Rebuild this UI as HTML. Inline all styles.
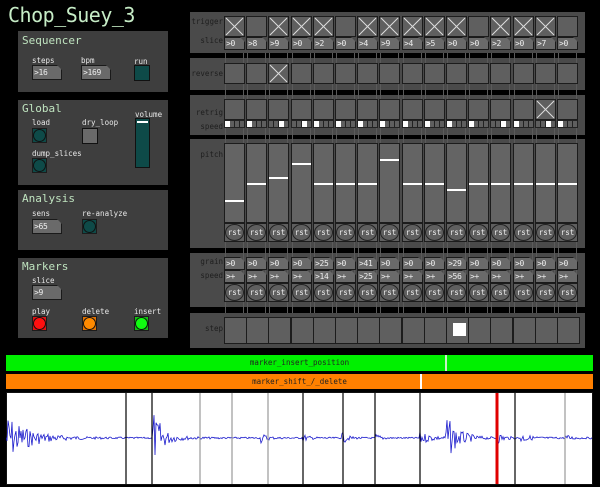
<!DOCTYPE html>
<html><head><meta charset="utf-8">
<style>
*{margin:0;padding:0;box-sizing:border-box}
body{width:600px;height:487px;background:#000;position:relative;overflow:hidden;font-family:"DejaVu Sans Mono","Liberation Mono",monospace;}
.a{position:absolute}
.title{left:8px;top:3px;font-size:20px;color:#c6ecc6;letter-spacing:-0.5px}
.lp{background:#3e3e3e}
.rp{background:#4a4a4a}
.h{color:#bfe3bf;font-size:11px}
.l{color:#e8e8e8;font-size:7.5px}
.d{color:#1e1e1e;font-size:7.5px}
.nb{background:#6a6a6a;border:1px solid #1a1a1a;clip-path:polygon(0 0,calc(100% - 5px) 0,100% 5px,100% 100%,0 100%);color:#eee;font-size:8px;line-height:11px;padding-left:1px;letter-spacing:-0.3px}
.cell{background:#5f5f5f;border:1px solid #1c1c1c}
.bang{border:1px solid #1c1c1c}
.bang i{position:absolute;left:0;top:0;right:0;bottom:0;border-radius:50%;border:1px solid #111}
</style></head><body>
<div class="a title">Chop_Suey_3</div>

<div class="a lp" style="left:18px;top:31px;width:150px;height:61px"></div>
<div class="a h" style="left:22px;top:34px">Sequencer</div>
<div class="a l" style="left:32px;top:56px">steps</div>
<div class="a l" style="left:81px;top:56px">bpm</div>
<div class="a l" style="left:134px;top:57px">run</div>
<div class="a nb" style="left:32px;top:65px;width:30px;height:15px;line-height:13px">&gt;16</div>
<div class="a nb" style="left:81px;top:65px;width:30px;height:15px;line-height:13px">&gt;169</div>
<div class="a" style="left:134px;top:65px;width:16px;height:16px;background:#0e4a48;border:1px solid #111"></div>

<div class="a lp" style="left:18px;top:100px;width:150px;height:85px"></div>
<div class="a h" style="left:22px;top:102px">Global</div>
<div class="a l" style="left:32px;top:118px">load</div>
<div class="a l" style="left:82px;top:118px">dry_loop</div>
<div class="a l" style="left:135px;top:110px">volume</div>
<div class="a bang" style="left:32px;top:128px;width:15px;height:15px;background:#0e4a48"><i></i></div>
<div class="a" style="left:82px;top:128px;width:16px;height:16px;background:#6a6a6a;border:1px solid #111"></div>
<div class="a" style="left:135px;top:118px;width:15px;height:50px;background:#0e4a48;border:1px solid #111"><div class="a" style="left:1px;top:2px;width:11px;height:2px;background:#fff"></div></div>
<div class="a l" style="left:32px;top:149px">dump_slices</div>
<div class="a bang" style="left:32px;top:158px;width:15px;height:15px;background:#0e4a48"><i></i></div>

<div class="a lp" style="left:18px;top:190px;width:150px;height:60px"></div>
<div class="a h" style="left:22px;top:192px">Analysis</div>
<div class="a l" style="left:32px;top:209px">sens</div>
<div class="a l" style="left:82px;top:209px">re-analyze</div>
<div class="a nb" style="left:32px;top:219px;width:30px;height:15px;line-height:13px">&gt;65</div>
<div class="a bang" style="left:82px;top:219px;width:15px;height:15px;background:#0e4a48"><i></i></div>

<div class="a lp" style="left:18px;top:258px;width:150px;height:80px"></div>
<div class="a h" style="left:22px;top:260px">Markers</div>
<div class="a l" style="left:32px;top:276px">slice</div>
<div class="a nb" style="left:32px;top:285px;width:30px;height:15px;line-height:13px">&gt;9</div>
<div class="a l" style="left:32px;top:307px">play</div>
<div class="a l" style="left:82px;top:307px">delete</div>
<div class="a l" style="left:134px;top:307px">insert</div>
<div class="a bang" style="left:32px;top:316px;width:15px;height:15px;background:#e01010"><i style="background:#ff1010"></i></div>
<div class="a bang" style="left:82px;top:316px;width:15px;height:15px;background:#e07000"><i style="background:#ff8a00"></i></div>
<div class="a bang" style="left:134px;top:316px;width:15px;height:15px;background:#10c010"><i style="background:#10ff10"></i></div>

<div class="a rp" style="left:190px;top:12px;width:395px;height:41px"></div>
<div class="a rp" style="left:190px;top:58px;width:395px;height:32px"></div>
<div class="a rp" style="left:190px;top:95px;width:395px;height:40px"></div>
<div class="a rp" style="left:190px;top:139px;width:395px;height:109px"></div>
<div class="a rp" style="left:190px;top:253px;width:395px;height:54px"></div>
<div class="a rp" style="left:190px;top:313px;width:395px;height:35px"></div>
<div id="grid"></div>
<div class="a d" style="left:190px;top:17px;width:33px;text-align:right">trigger</div>
<div class="a d" style="left:190px;top:36px;width:33px;text-align:right">slice</div>
<div class="a d" style="left:190px;top:69px;width:33px;text-align:right">reverse</div>
<div class="a d" style="left:190px;top:108px;width:33px;text-align:right">retrig</div>
<div class="a d" style="left:190px;top:122px;width:33px;text-align:right">speed</div>
<div class="a d" style="left:190px;top:150px;width:33px;text-align:right">pitch</div>
<div class="a d" style="left:190px;top:257px;width:33px;text-align:right">grain</div>
<div class="a d" style="left:190px;top:271px;width:33px;text-align:right">speed</div>
<div class="a d" style="left:190px;top:324px;width:33px;text-align:right">step</div>

<div class="a" style="left:6px;top:355px;width:587px;height:16px;background:#00f000"></div>
<div class="a" style="left:445px;top:355px;width:2px;height:16px;background:#c8f0c8"></div>
<div class="a" style="left:6px;top:355px;width:587px;text-align:center;font-size:7.5px;line-height:16px;color:#222">marker_insert_position</div>
<div class="a" style="left:6px;top:374px;width:587px;height:15px;background:#ff8000"></div>
<div class="a" style="left:420px;top:374px;width:2px;height:15px;background:#fff"></div>
<div class="a" style="left:6px;top:374px;width:587px;text-align:center;font-size:7.5px;line-height:15px;color:#222">marker_shift_/_delete</div>
<svg class="a" style="left:6px;top:392px" width="587" height="93" id="wf"></svg>

<script>
var g=document.getElementById('grid'),h='';
var trig=[1,0,1,1,1,0,1,1,1,1,1,0,1,1,1,0];
var sl=[0,8,9,0,2,0,4,9,4,5,0,0,2,0,7,0];
var sp=[0,0,2,2,0,0,0,0,0,0,0,0,2,0,2,0];
var pit=[200,183,177,163,183,183,183,159,183,183,189,183,183,183,183,183];
var gr=[0,0,0,0,25,0,41,0,0,0,29,0,0,0,0,0];
var sd=['+','+','+','+','14','+','25','+','+','+','56','+','+','+','+','+'];
function X(x,y,w,hh){return '<svg class="a" style="left:'+x+'px;top:'+y+'px" width="'+w+'" height="'+hh+'"><path d="M2 2L'+(w-2)+' '+(hh-2)+'M'+(w-2)+' 2L2 '+(hh-2)+'" stroke="#ddd" stroke-width="1"/></svg>';}
function nb(x,y,t){return '<div class="a nb" style="left:'+x+'px;top:'+y+'px;width:21px;height:13px">&gt;'+t+'</div>';}
function rst(x,y){return '<div class="a" style="left:'+x+'px;top:'+y+'px;width:21px;height:19px;background:#5f5f5f;border:1px solid #1c1c1c"><div class="a" style="left:0;top:0;width:19px;height:17px;border-radius:50%;border:1px solid #222;color:#eee;font-size:7.5px;line-height:16px;text-align:center">rst</div></div>';}
for(var i=0;i<16;i++){
 var x=Math.round(224+i*22.2);
 h+='<div class="a" style="left:'+(x+1)+'px;top:53px;width:1px;height:260px;background:#5a5a5a"></div>';
 h+='<div class="a" style="left:'+(x+19)+'px;top:53px;width:1px;height:260px;background:#5a5a5a"></div>';
 h+='<div class="a cell" style="left:'+x+'px;top:16px;width:21px;height:21px"></div>';
 if(trig[i])h+=X(x,16,21,21);
 h+=nb(x,37,sl[i]);
 h+='<div class="a cell" style="left:'+x+'px;top:63px;width:21px;height:21px"></div>';
 if(i==2)h+=X(x,63,21,21);
 h+='<div class="a cell" style="left:'+x+'px;top:99px;width:21px;height:21px"></div>';
 if(i==14)h+=X(x,99,21,21);
 for(var k=0;k<4;k++)h+='<div class="a" style="left:'+(x+k*5)+'px;top:120px;width:6px;height:8px;background:#5f5f5f;border:1px solid #222"></div>';
 h+='<div class="a" style="left:'+(x+sp[i]*5+1)+'px;top:121px;width:5px;height:6px;background:#fff"></div>';
 h+='<div class="a cell" style="left:'+x+'px;top:143px;width:21px;height:80px;background:#646464"></div>';
 h+='<div class="a" style="left:'+(x+1)+'px;top:'+pit[i]+'px;width:19px;height:2px;background:#fff"></div>';
 h+=rst(x,223);
 h+=nb(x,257,gr[i]);
 h+=nb(x,270,sd[i]);
 h+=rst(x,283);
 h+='<div class="a cell" style="left:'+x+'px;top:317px;width:23px;height:27px"></div>';
 if(i==10)h+='<div class="a" style="left:'+(x+7)+'px;top:323px;width:13px;height:13px;background:#fff"></div>';
}
g.innerHTML=h;
var s='<rect x="0.5" y="0.5" width="586" height="92" fill="#fff" stroke="#111"/>';
var seed=7;function r(){seed=(seed*9301+49297)%233280;return seed/233280-0.5;}
var env=function(x){var e=0.02;
 function b(c,a,d){if(x>=c)e+=a*Math.exp(-(x-c)/d);}
 b(0,0.6,22);b(147,0.8,5);b(152,0.2,15);b(255,0.12,6);b(296,0.1,6);b(336,0.15,5);b(370,0.1,5);
 b(414,0.15,12);b(440,0.55,12);b(491,0.15,6);b(515,0.1,10);b(560,0.07,6);return e;};
var p='';for(var x=0;x<587;x++){var y=46+r()*2*env(x)*40;p+=x+','+y.toFixed(1)+' ';}
s+='<polyline points="'+p+'" fill="none" stroke="#1a1acc" stroke-width="0.8"/>';
var m=[[120,'#000'],[146,'#000'],[194,'#999'],[226,'#999'],[262,'#999'],[297,'#000'],[337,'#000'],[369,'#000'],[414,'#000'],[509,'#000'],[559,'#999']];
m.forEach(function(a){s+='<line x1="'+a[0]+'" y1="1" x2="'+a[0]+'" y2="92" stroke="'+a[1]+'" stroke-width="1.2"/>';});
s+='<line x1="491" y1="1" x2="491" y2="92" stroke="#e00000" stroke-width="3"/>';
document.getElementById('wf').innerHTML=s;
</script>
</body></html>
